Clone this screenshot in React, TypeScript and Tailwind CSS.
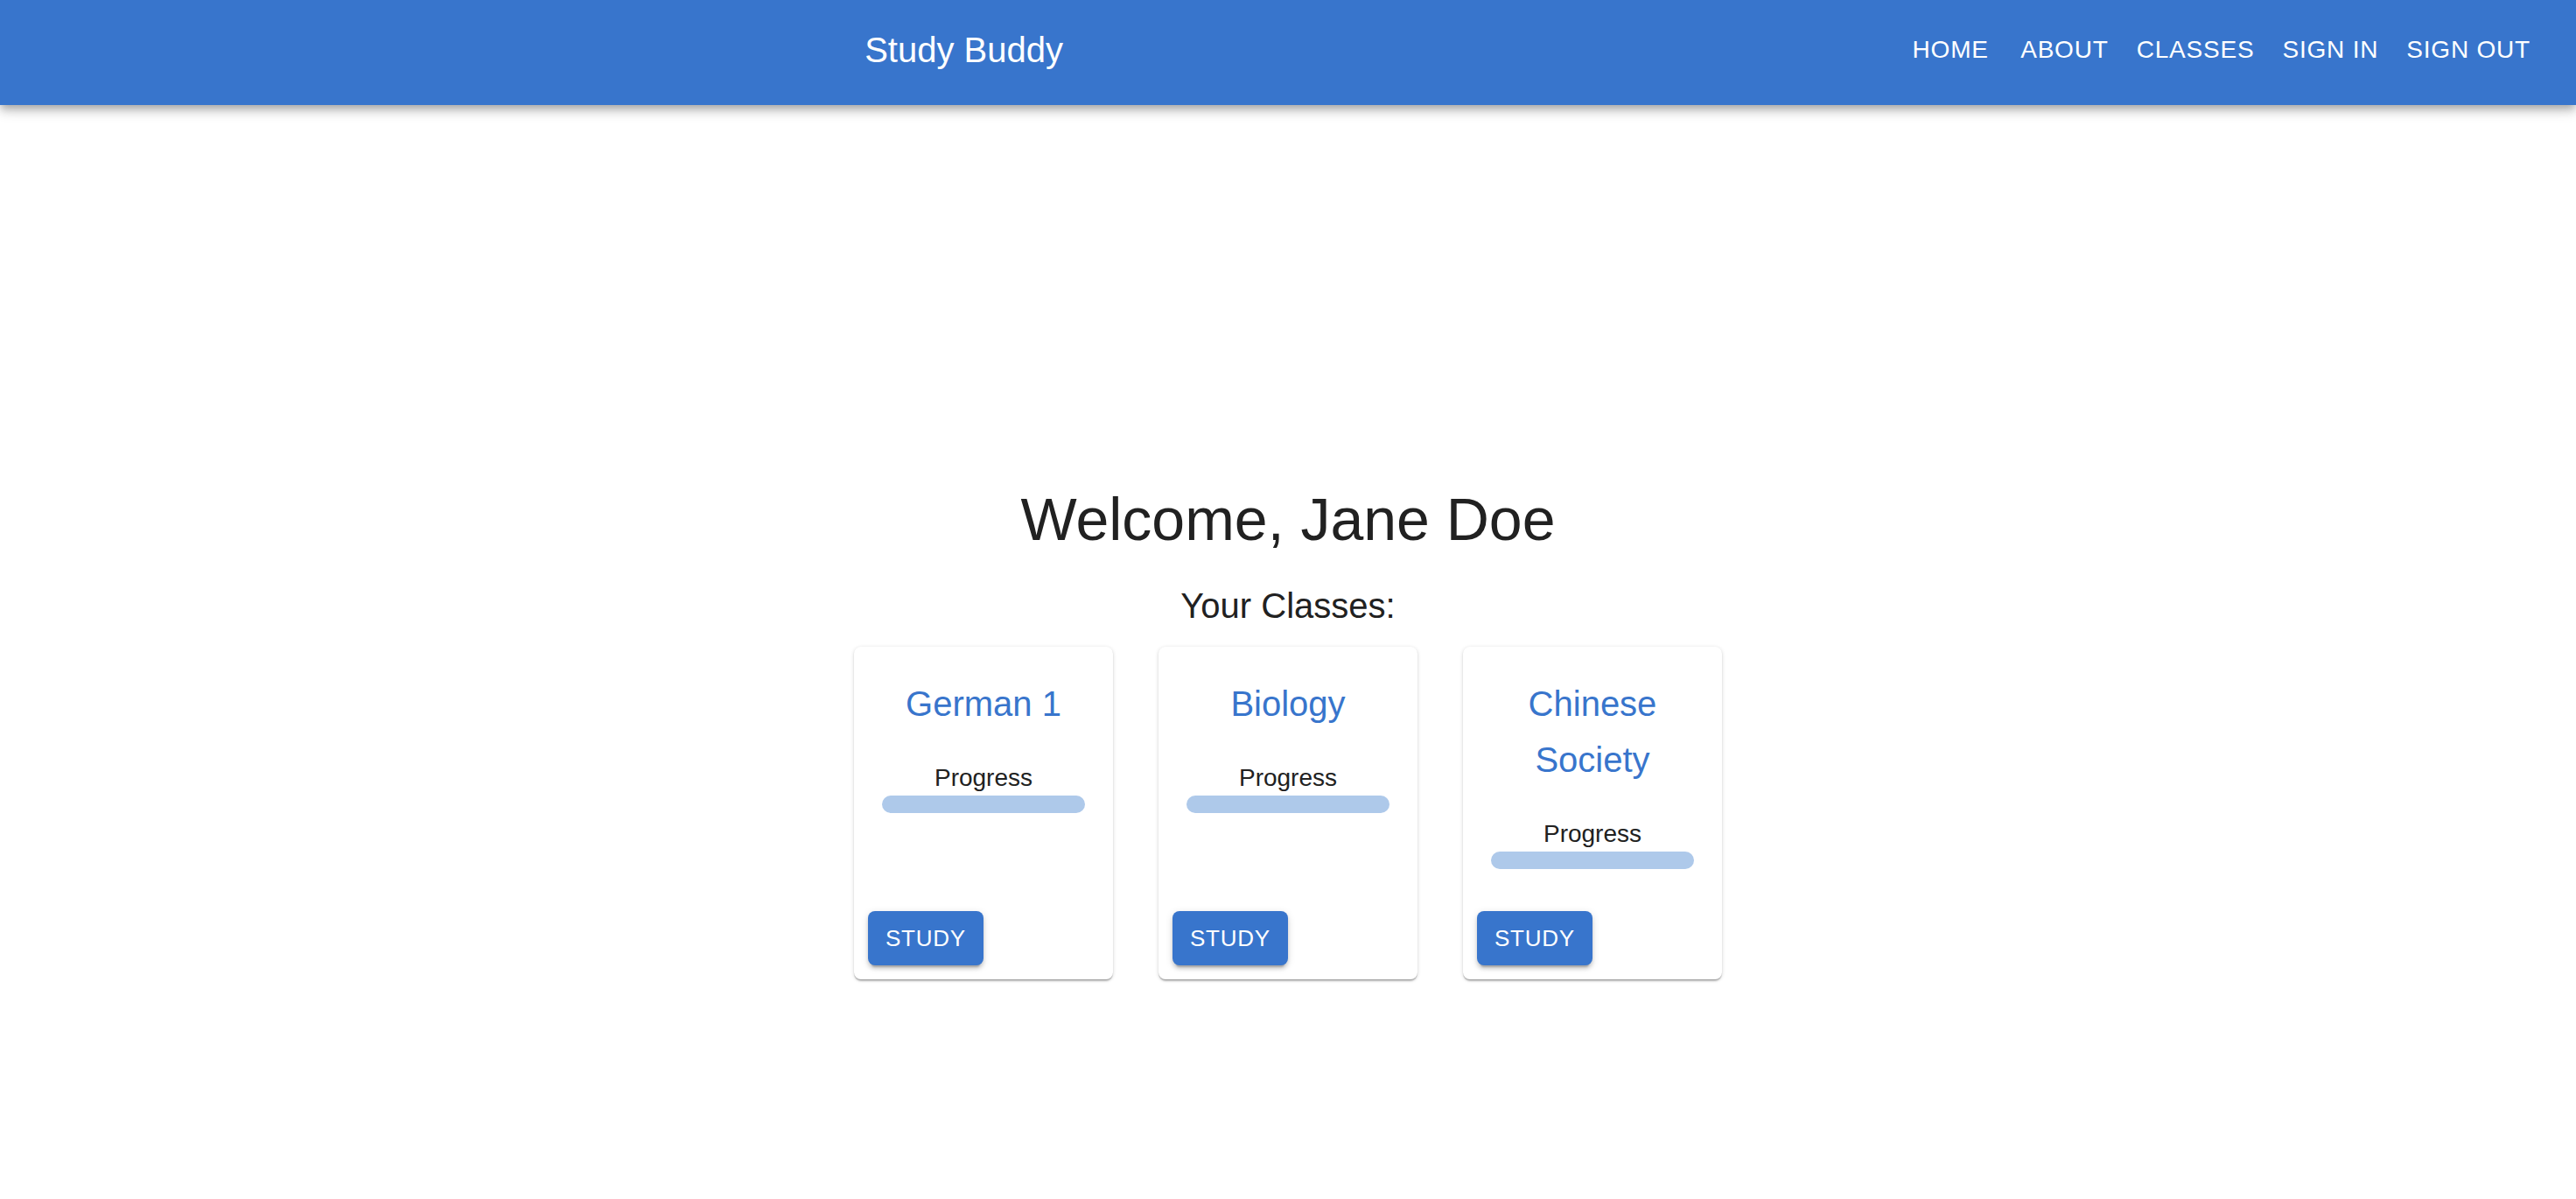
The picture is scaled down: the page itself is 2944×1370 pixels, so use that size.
const navItems = ['Home', 'About', 'Classes', 'Sign In', 'Sign Out']

interface ClassItem {
  id: number
  name: string
}

const classes: ClassItem[] = [
  { id: 1, name: 'German 1' },
  { id: 2, name: 'Biology' },
  { id: 3, name: 'Chinese Society' },
]

const ClassCard = ({ item }: { item: ClassItem }) => {
  return (
    <div className="w-[296px] h-[380px] flex flex-col justify-between bg-white rounded-[8px] shadow-[0_3px_2px_-1px_rgba(0,0,0,0.2),0_1px_1px_0_rgba(0,0,0,0.14),0_1px_4px_0_rgba(0,0,0,0.16)]">
      <div className="p-[32px] pb-0 text-center">
        <div className="text-[40px] leading-[64px] text-[#3875cc] pt-[1px]">{item.name}</div>
        <div className="mt-[33px] text-[28px] leading-[40px] text-[#212121]">Progress</div>
        <div className="h-[20px] w-full rounded-full bg-[#aec9ea]" />
      </div>
      <div className="p-[16px]">
        <button className="h-[62px] px-[20px] flex items-center rounded-[8px] bg-[#3875cc] text-white text-[26px] tracking-[0.75px] uppercase shadow-[0_6px_2px_-4px_rgba(0,0,0,0.2),0_4px_4px_0_rgba(0,0,0,0.14),0_2px_10px_0_rgba(0,0,0,0.12)]">
          Study
        </button>
      </div>
    </div>
  )
}

const App = () => {
  return (
    <div className="min-h-screen bg-white font-['Liberation_Sans',Arial,sans-serif]">
      {/* top bar */}
      <header className="h-[120px] pl-[38px] pr-[36px] pb-[7px] flex items-center bg-[#3875cc] text-white shadow-[0_4px_8px_-2px_rgba(0,0,0,0.2),0_8px_10px_0_rgba(0,0,0,0.14),0_2px_20px_0_rgba(0,0,0,0.12)]">
        <div className="flex-1 text-center text-[40px] leading-[64px]">Study Buddy</div>
        <nav className="flex">
          {navItems.map((n) => (
            <button key={n} className="min-w-[128px] px-[16px] text-[28px] leading-[49px] tracking-[0.8px] uppercase text-center">
              {n}
            </button>
          ))}
        </nav>
      </header>

      <main className="pt-[431px] flex flex-col items-center">
        <h1 className="text-[68px] leading-[84px] text-[#212121]">Welcome, Jane Doe</h1>
        <h2 className="mt-[25px] text-[40px] leading-[64px] text-[#212121]">Your Classes:</h2>
        <div className="mt-[15px] flex gap-[52px]">
          {classes.map((c) => (
            <ClassCard key={c.id} item={c} />
          ))}
        </div>
      </main>
    </div>
  )
}

export default App
